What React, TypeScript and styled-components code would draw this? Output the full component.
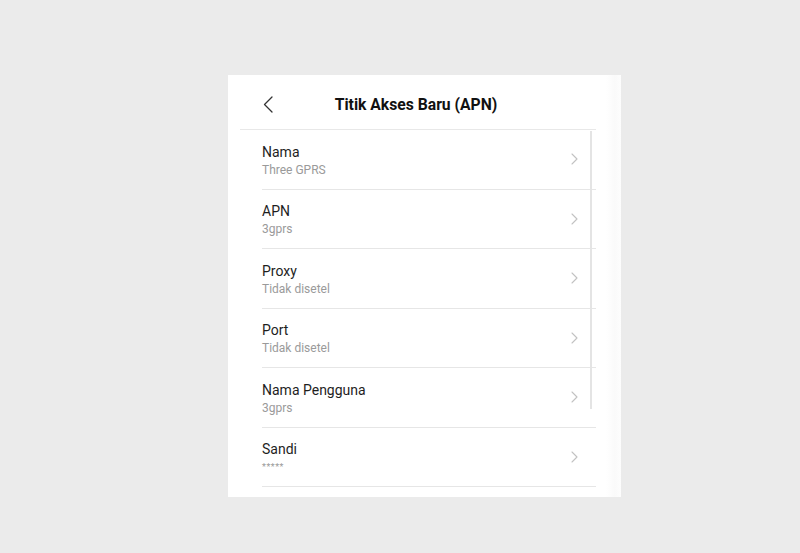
import React from "react";
import styled, { createGlobalStyle } from "styled-components";

const Global = createGlobalStyle`
  html, body { margin: 0; padding: 0; background: #ebebeb; }
  body { font-family: Roboto, "Noto Sans", Arial, sans-serif; }
  #root { width: 800px; height: 553px; }
`;

const Page = styled.div`
  width: 800px;
  height: 553px;
  box-sizing: border-box;
  padding: 75px 0 0 228px;
  background: #ebebeb;
`;

const Card = styled.div`
  position: relative;
  width: 393px;
  height: 422px;
  background: #fff;
  display: flex;
  overflow: hidden;
`;

const Main = styled.div`
  width: 368px;
  display: flex;
  flex-direction: column;
`;

const Edge = styled.div`
  width: 25px;
  background: linear-gradient(to right, #fff 0%, #fff 40%, #fafafa 75%, #fdfdfd 100%);
`;

const Header = styled.div`
  height: 55px;
  margin-left: 12px;
  border-bottom: 1px solid #e8e8e8;
  display: flex;
  align-items: center;
  position: relative;
  box-sizing: border-box;
  padding-top: 4px;
`;

const BackButton = styled.div`
  width: 12px;
  height: 18px;
  margin-left: 23px;
  display: flex;
  align-items: center;
`;

const Title = styled.div`
  position: absolute;
  left: 0;
  right: 4px;
  top: 4px;
  bottom: 0;
  display: flex;
  align-items: center;
  justify-content: center;
  font-size: 15.7px;
  font-weight: 700;
  color: #111;
  pointer-events: none;
`;

const List = styled.div`
  padding-left: 34px;
  display: flex;
  flex-direction: column;
`;

const Row = styled.div`
  height: 59.5px;
  box-sizing: border-box;
  border-bottom: 1px solid #e6e6e6;
  display: flex;
  align-items: center;
  justify-content: space-between;
  padding-right: 18px;
`;

const Texts = styled.div`
  display: flex;
  flex-direction: column;
  padding-top: 2px;
`;

const Label = styled.div`
  font-size: 14px;
  line-height: 18px;
  color: #1e1e1e;
`;

const Value = styled.div<{ $masked?: boolean }>`
  font-size: ${(p) => (p.$masked ? "9px" : "12px")};
  line-height: 15px;
  margin-top: 2px;
  color: #9a9a9a;
  letter-spacing: ${(p) => (p.$masked ? "0.5px" : "0")};
`;

const Scrollbar = styled.div`
  position: absolute;
  left: 362px;
  top: 56px;
  width: 2px;
  height: 278px;
  background: #e4e4e4;
`;

const Chevron = ({ color, w, h, sw }: { color: string; w: number; h: number; sw: number }) => (
  <svg width={w} height={h} viewBox={`0 0 ${w} ${h}`} fill="none">
    <path
      d={`M1 1 L${w - 1} ${h / 2} L1 ${h - 1}`}
      stroke={color}
      strokeWidth={sw}
      strokeLinecap="round"
      strokeLinejoin="round"
    />
  </svg>
);

const BackIcon = () => (
  <svg width="10" height="17" viewBox="0 0 10 17" fill="none">
    <path d="M9 1 L1.5 8.5 L9 16" stroke="#333" strokeWidth="1.3" strokeLinecap="round" strokeLinejoin="round" />
  </svg>
);

const items = [
  { label: "Nama", value: "Three GPRS" },
  { label: "APN", value: "3gprs" },
  { label: "Proxy", value: "Tidak disetel" },
  { label: "Port", value: "Tidak disetel" },
  { label: "Nama Pengguna", value: "3gprs" },
  { label: "Sandi", value: "*****", masked: true },
];

export default function App() {
  return (
    <>
      <Global />
      <Page>
        <Card>
          <Main>
            <Header>
              <BackButton>
                <BackIcon />
              </BackButton>
              <Title>Titik Akses Baru (APN)</Title>
            </Header>
            <List>
              {items.map((it) => (
                <Row key={it.label}>
                  <Texts>
                    <Label>{it.label}</Label>
                    <Value $masked={it.masked}>{it.value}</Value>
                  </Texts>
                  <Chevron color="#c2c2c2" w={7} h={12} sw={1.1} />
                </Row>
              ))}
            </List>
          </Main>
          <Edge />
          <Scrollbar />
        </Card>
      </Page>
    </>
  );
}
